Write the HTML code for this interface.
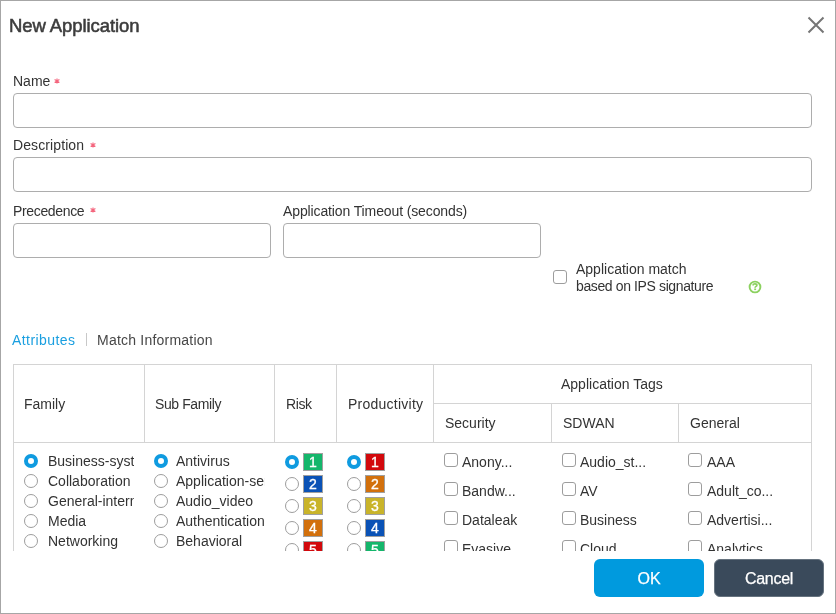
<!DOCTYPE html>
<html>
<head>
<meta charset="utf-8">
<style>
html,body{margin:0;padding:0;}
body{width:836px;height:614px;position:relative;overflow:hidden;background:#fff;font-family:"Liberation Sans",sans-serif;color:#333;font-size:14px;}
.frame{position:absolute;left:0;top:0;width:836px;height:614px;box-sizing:border-box;border:1px solid #a6a6a6;}
.t{position:absolute;white-space:nowrap;line-height:16px;font-size:14px;will-change:transform;}
.ast{position:absolute;}
.inp{position:absolute;box-sizing:border-box;border:1px solid #adadad;border-radius:4px;background:#fff;}
.title{position:absolute;left:9px;top:16px;font-size:18.5px;font-weight:normal;-webkit-text-stroke:0.55px #3c3c3c;color:#3c3c3c;line-height:20px;white-space:nowrap;letter-spacing:-0.08px;will-change:transform;}
.cb{position:absolute;box-sizing:border-box;width:14px;height:14px;border:1px solid #9d9d9d;border-radius:3px;background:#fff;}
.rd{position:absolute;box-sizing:border-box;width:14px;height:14px;border:1px solid #9d9d9d;border-radius:50%;background:#fff;}
.rd.on{border:4px solid #0f9be0;}
.hl{position:absolute;background:#d4d4d4;}
.badge{position:absolute;box-sizing:border-box;width:20px;height:18px;border:1px solid #a0a0a0;color:#fff;font-size:14px;line-height:16px;text-align:center;will-change:transform;-webkit-text-stroke:0.3px #fff;}
.clip{position:absolute;overflow:hidden;}
.btn{position:absolute;top:559px;width:110px;height:38px;border-radius:6px;color:#fff;font-size:16px;-webkit-text-stroke:0.25px #fff;line-height:40px;text-align:center;box-sizing:border-box;will-change:transform;}
</style>
</head>
<body>
<div class="frame"></div>
<div class="title">New Application</div>
<svg style="position:absolute;left:806px;top:15px" width="20" height="20" viewBox="0 0 20 20"><path d="M2.5 2.5 L17.5 17.5 M17.5 2.5 L2.5 17.5" stroke="#767676" stroke-width="2" fill="none"/></svg>

<div class="t" style="left:13px;top:73px">Name</div><svg class="ast" style="left:53px;top:77px" width="8" height="8" viewBox="0 0 8 8"><path d="M4 1.4 V6.6 M1.6 2.6 L6.4 5.4 M1.6 5.4 L6.4 2.6" stroke="#f4667e" stroke-width="1.1"/></svg>
<div class="inp" style="left:13px;top:93px;width:799px;height:35px"></div>
<div class="t" style="left:13px;top:137px;letter-spacing:0.1px">Description</div><svg class="ast" style="left:89px;top:141px" width="8" height="8" viewBox="0 0 8 8"><path d="M4 1.4 V6.6 M1.6 2.6 L6.4 5.4 M1.6 5.4 L6.4 2.6" stroke="#f4667e" stroke-width="1.1"/></svg>
<div class="inp" style="left:13px;top:157px;width:799px;height:35px"></div>
<div class="t" style="left:13px;top:203px;letter-spacing:-0.35px">Precedence</div><svg class="ast" style="left:89px;top:206px" width="8" height="8" viewBox="0 0 8 8"><path d="M4 1.4 V6.6 M1.6 2.6 L6.4 5.4 M1.6 5.4 L6.4 2.6" stroke="#f4667e" stroke-width="1.1"/></svg>
<div class="inp" style="left:13px;top:223px;width:258px;height:35px"></div>
<div class="t" style="left:283px;top:203px;letter-spacing:-0.12px">Application Timeout (seconds)</div>
<div class="inp" style="left:283px;top:223px;width:258px;height:35px"></div>

<div class="cb" style="left:553px;top:270px"></div>
<div class="t" style="left:576px;top:261px">Application match</div>
<div class="t" style="left:576px;top:278px;letter-spacing:-0.38px">based on IPS signature</div>
<svg style="position:absolute;left:748px;top:279.5px" width="14" height="14" viewBox="0 0 14 14"><circle cx="7" cy="7" r="5.4" stroke="#8cd160" stroke-width="1.9" fill="none"/><path d="M5.1 5.5 C5.1 4.3 6 3.8 7 3.8 C8.1 3.8 8.9 4.4 8.9 5.3 C8.9 6.4 7.1 6.4 7.1 7.7" stroke="#8cd160" stroke-width="1.7" fill="none"/><rect x="6.2" y="8.5" width="1.9" height="1.6" fill="#8cd160"/></svg>

<div class="t" style="left:12px;top:332px;color:#1a9fe0;letter-spacing:0.43px">Attributes</div>
<div class="hl" style="left:86px;top:333px;width:1px;height:13px;background:#c8c8c8"></div>
<div class="t" style="left:97px;top:332px;color:#474747;letter-spacing:0.22px">Match Information</div>

<!-- table -->
<div class="hl" style="left:13px;top:364px;width:799px;height:1px"></div>
<div class="hl" style="left:433px;top:403px;width:379px;height:1px"></div>
<div class="hl" style="left:13px;top:442px;width:799px;height:1px"></div>
<div class="hl" style="left:13px;top:364px;width:1px;height:187px"></div>
<div class="hl" style="left:811px;top:364px;width:1px;height:187px"></div>
<div class="hl" style="left:144px;top:364px;width:1px;height:79px"></div>
<div class="hl" style="left:274px;top:364px;width:1px;height:79px"></div>
<div class="hl" style="left:336px;top:364px;width:1px;height:79px"></div>
<div class="hl" style="left:433px;top:364px;width:1px;height:79px"></div>
<div class="hl" style="left:551px;top:403px;width:1px;height:40px"></div>
<div class="hl" style="left:678px;top:403px;width:1px;height:40px"></div>

<div class="t" style="left:24px;top:396px">Family</div>
<div class="t" style="left:155px;top:396px;letter-spacing:-0.4px">Sub Family</div>
<div class="t" style="left:286px;top:396px;letter-spacing:-0.4px">Risk</div>
<div class="t" style="left:348px;top:396px;letter-spacing:0.25px">Productivity</div>
<div class="t" style="left:561px;top:376px">Application Tags</div>
<div class="t" style="left:445px;top:415px">Security</div>
<div class="t" style="left:563px;top:415px">SDWAN</div>
<div class="t" style="left:690px;top:415px">General</div>

<div class="clip" style="left:14px;top:443px;width:797px;height:108px">
 <div style="position:absolute;left:-14px;top:-443px;width:836px;height:614px">
  <!-- family -->
  <div class="rd on" style="left:24px;top:454px"></div>
  <div class="rd" style="left:24px;top:474px"></div>
  <div class="rd" style="left:24px;top:494px"></div>
  <div class="rd" style="left:24px;top:514px"></div>
  <div class="rd" style="left:24px;top:534px"></div>
  <div class="clip" style="left:48px;top:450px;width:86px;height:110px">
   <div class="t" style="left:0;top:3px">Business-system</div>
   <div class="t" style="left:0;top:23px">Collaboration</div>
   <div class="t" style="left:0;top:43px">General-internet</div>
   <div class="t" style="left:0;top:63px">Media</div>
   <div class="t" style="left:0;top:83px">Networking</div>
  </div>
  <!-- sub family -->
  <div class="rd on" style="left:154px;top:454px"></div>
  <div class="rd" style="left:154px;top:474px"></div>
  <div class="rd" style="left:154px;top:494px"></div>
  <div class="rd" style="left:154px;top:514px"></div>
  <div class="rd" style="left:154px;top:534px"></div>
  <div class="clip" style="left:176px;top:450px;width:89px;height:110px">
   <div class="t" style="left:0;top:3px">Antivirus</div>
   <div class="t" style="left:0;top:23px">Application-service</div>
   <div class="t" style="left:0;top:43px">Audio_video</div>
   <div class="t" style="left:0;top:63px">Authentication</div>
   <div class="t" style="left:0;top:83px">Behavioral</div>
  </div>
  <!-- risk -->
  <div class="rd on" style="left:285px;top:455px"></div>
  <div class="rd" style="left:285px;top:477px"></div>
  <div class="rd" style="left:285px;top:499px"></div>
  <div class="rd" style="left:285px;top:521px"></div>
  <div class="rd" style="left:285px;top:543px"></div>
  <div class="badge" style="left:303px;top:453px;background:#14b66b">1</div>
  <div class="badge" style="left:303px;top:475px;background:#0a52b6">2</div>
  <div class="badge" style="left:303px;top:497px;background:#c9b42a">3</div>
  <div class="badge" style="left:303px;top:519px;background:#d2700c">4</div>
  <div class="badge" style="left:303px;top:541px;background:#d2080c">5</div>
  <!-- productivity -->
  <div class="rd on" style="left:347px;top:455px"></div>
  <div class="rd" style="left:347px;top:477px"></div>
  <div class="rd" style="left:347px;top:499px"></div>
  <div class="rd" style="left:347px;top:521px"></div>
  <div class="rd" style="left:347px;top:543px"></div>
  <div class="badge" style="left:365px;top:453px;background:#d2080c">1</div>
  <div class="badge" style="left:365px;top:475px;background:#d2700c">2</div>
  <div class="badge" style="left:365px;top:497px;background:#c9b42a">3</div>
  <div class="badge" style="left:365px;top:519px;background:#0a52b6">4</div>
  <div class="badge" style="left:365px;top:541px;background:#14b66b">5</div>
  <!-- tags -->
  <div class="cb" style="left:444px;top:453px"></div>
  <div class="cb" style="left:444px;top:482px"></div>
  <div class="cb" style="left:444px;top:511px"></div>
  <div class="cb" style="left:444px;top:540px"></div>
  <div class="t" style="left:462px;top:454px">Anony...</div>
  <div class="t" style="left:462px;top:483px">Bandw...</div>
  <div class="t" style="left:462px;top:512px">Dataleak</div>
  <div class="t" style="left:462px;top:541px">Evasive</div>
  <div class="cb" style="left:562px;top:453px"></div>
  <div class="cb" style="left:562px;top:482px"></div>
  <div class="cb" style="left:562px;top:511px"></div>
  <div class="cb" style="left:562px;top:540px"></div>
  <div class="t" style="left:580px;top:454px">Audio_st...</div>
  <div class="t" style="left:580px;top:483px">AV</div>
  <div class="t" style="left:580px;top:512px">Business</div>
  <div class="t" style="left:580px;top:541px">Cloud</div>
  <div class="cb" style="left:688px;top:453px"></div>
  <div class="cb" style="left:688px;top:482px"></div>
  <div class="cb" style="left:688px;top:511px"></div>
  <div class="cb" style="left:688px;top:540px"></div>
  <div class="t" style="left:707px;top:454px">AAA</div>
  <div class="t" style="left:707px;top:483px">Adult_co...</div>
  <div class="t" style="left:707px;top:512px">Advertisi...</div>
  <div class="t" style="left:707px;top:541px">Analytics</div>
 </div>
</div>

<div class="btn" style="left:594px;background:#009ade">OK</div>
<div class="btn" style="left:714px;background:#3a4a5b;border:1px solid #66737f;line-height:38px;letter-spacing:-0.3px">Cancel</div>
</body>
</html>
